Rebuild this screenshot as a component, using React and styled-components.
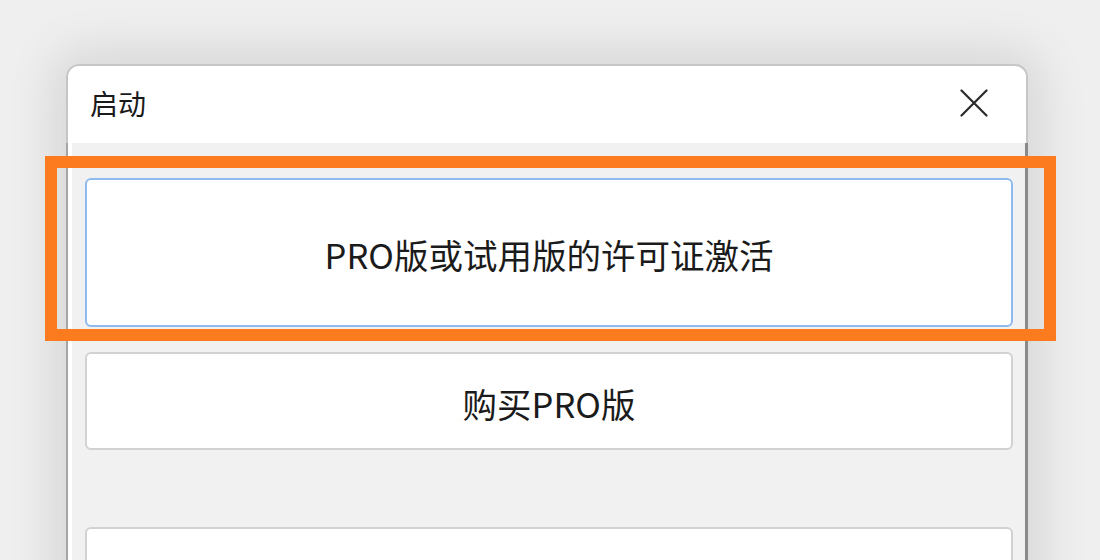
import React from "react";
import styled, { createGlobalStyle } from "styled-components";

const GlobalStyle = createGlobalStyle`
  html, body {
    margin: 0;
    padding: 0;
    background: #efefef;
    overflow: hidden;
  }
  body {
    font-family: "Noto Sans CJK SC", "Noto Sans", sans-serif;
    color: #1b1b1b;
  }
`;

const Desktop = styled.div`
  width: 1100px;
  height: 560px;
  padding: 64px 0 0 66px;
  box-sizing: border-box;
  overflow: hidden;
`;

const Window = styled.div`
  width: 962px;
  height: 600px;
  display: flex;
  flex-direction: column;
  border-radius: 13px 13px 0 0;
  box-shadow: 0 0 50px 12px rgba(0, 0, 0, 0.11);
`;

const TitleBar = styled.div`
  height: 77px;
  display: flex;
  align-items: center;
  justify-content: space-between;
  padding: 0 37px 0 22px;
  background: #fff;
  border: 2px solid #c6c6c6;
  border-bottom: none;
  border-radius: 13px 13px 0 0;
`;

const Title = styled.span`
  font-size: 28px;
  line-height: 1;
  margin-top: -3px;
  color: #1a1a1a;
`;

const CloseButton = styled.button`
  width: 30px;
  height: 30px;
  padding: 0;
  border: none;
  background: none;
  display: flex;
  align-items: center;
  justify-content: center;
  margin-top: -3px;
`;

const Content = styled.div`
  flex: 1;
  display: flex;
  flex-direction: column;
  padding: 35px 12px 0 17px;
  background: #f1f1f1;
  border-left: 2px solid #a6a6a6;
  border-right: 3px solid #8a8a8a;
  box-shadow: inset 4px 0 0 #fff;
`;

const Choice = styled.button`
  position: relative;
  height: ${(p) => p.$height}px;
  margin-bottom: ${(p) => p.$gap}px;
  flex-shrink: 0;
  box-sizing: border-box;
  background: #fff;
  border: 2px solid ${(p) => (p.$focused ? "#8fbaf0" : "#d2d2d2")};
  border-radius: 6px;
  font-family: "Noto Sans CJK SC", "Noto Sans", sans-serif;
  font-size: 34.5px;
  color: #1b1b1b;
  padding: 3px 0 0;
  cursor: pointer;
`;

const Highlight = styled.div`
  position: absolute;
  left: -42px;
  right: -45px;
  top: -24px;
  bottom: -16px;
  border: 12px solid #fd7b1f;
  pointer-events: none;
`;

const CloseIcon = () => (
  <svg width="28" height="28" viewBox="0 0 28 28">
    <path
      d="M1.5 1.5 L26.5 26.5 M26.5 1.5 L1.5 26.5"
      stroke="#2a2a2a"
      strokeWidth="2.2"
      strokeLinecap="round"
    />
  </svg>
);

export default function App() {
  return (
    <>
      <GlobalStyle />
      <Desktop>
        <Window>
          <TitleBar>
            <Title>启动</Title>
            <CloseButton aria-label="关闭">
              <CloseIcon />
            </CloseButton>
          </TitleBar>
          <Content>
            <Choice $height={149} $gap={25} $focused>
              PRO版或试用版的许可证激活
              <Highlight />
            </Choice>
            <Choice $height={98} $gap={77}>
              购买PRO版
            </Choice>
            <Choice $height={98} $gap={0} />
          </Content>
        </Window>
      </Desktop>
    </>
  );
}
